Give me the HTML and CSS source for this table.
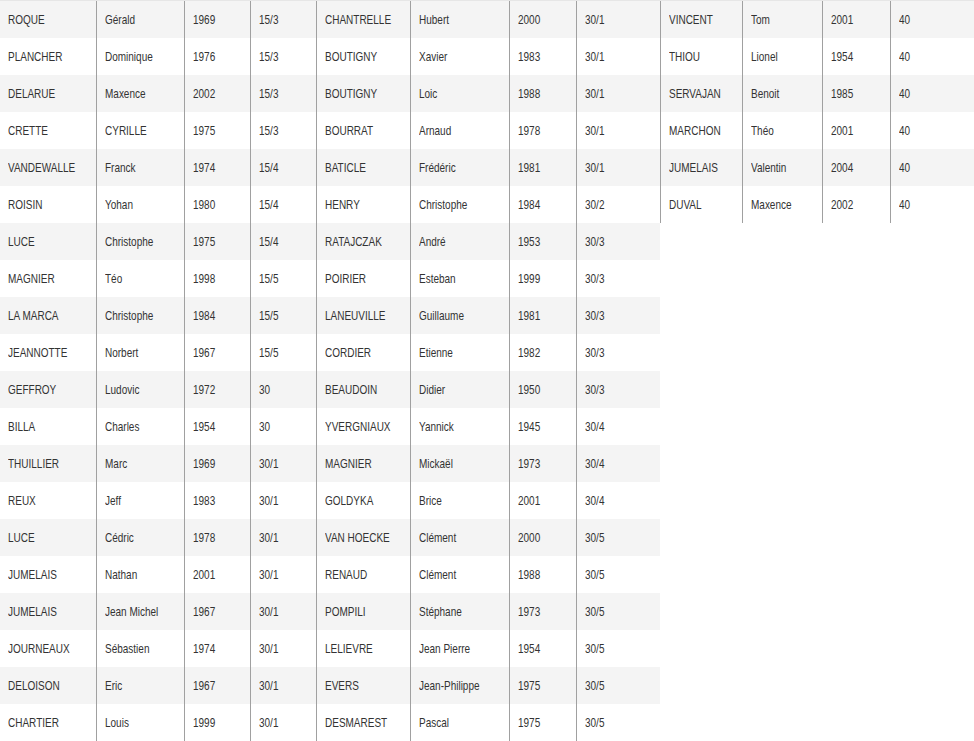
FILE: index.html
```html
<!DOCTYPE html>
<html lang="fr">
<head>
<meta charset="utf-8">
<title>Classement</title>
<link rel="stylesheet" href="styles.css">
</head>
<body>
<div class="sheet">
  <div class="tbl t1">
    <div class="row"><div class="c"><span>ROQUE</span></div><div class="c"><span>Gérald</span></div><div class="c"><span>1969</span></div><div class="c"><span>15/3</span></div></div>
    <div class="row"><div class="c"><span>PLANCHER</span></div><div class="c"><span>Dominique</span></div><div class="c"><span>1976</span></div><div class="c"><span>15/3</span></div></div>
    <div class="row"><div class="c"><span>DELARUE</span></div><div class="c"><span>Maxence</span></div><div class="c"><span>2002</span></div><div class="c"><span>15/3</span></div></div>
    <div class="row"><div class="c"><span>CRETTE</span></div><div class="c"><span>CYRILLE</span></div><div class="c"><span>1975</span></div><div class="c"><span>15/3</span></div></div>
    <div class="row"><div class="c"><span>VANDEWALLE</span></div><div class="c"><span>Franck</span></div><div class="c"><span>1974</span></div><div class="c"><span>15/4</span></div></div>
    <div class="row"><div class="c"><span>ROISIN</span></div><div class="c"><span>Yohan</span></div><div class="c"><span>1980</span></div><div class="c"><span>15/4</span></div></div>
    <div class="row"><div class="c"><span>LUCE</span></div><div class="c"><span>Christophe</span></div><div class="c"><span>1975</span></div><div class="c"><span>15/4</span></div></div>
    <div class="row"><div class="c"><span>MAGNIER</span></div><div class="c"><span>Téo</span></div><div class="c"><span>1998</span></div><div class="c"><span>15/5</span></div></div>
    <div class="row"><div class="c"><span>LA MARCA</span></div><div class="c"><span>Christophe</span></div><div class="c"><span>1984</span></div><div class="c"><span>15/5</span></div></div>
    <div class="row"><div class="c"><span>JEANNOTTE</span></div><div class="c"><span>Norbert</span></div><div class="c"><span>1967</span></div><div class="c"><span>15/5</span></div></div>
    <div class="row"><div class="c"><span>GEFFROY</span></div><div class="c"><span>Ludovic</span></div><div class="c"><span>1972</span></div><div class="c"><span>30</span></div></div>
    <div class="row"><div class="c"><span>BILLA</span></div><div class="c"><span>Charles</span></div><div class="c"><span>1954</span></div><div class="c"><span>30</span></div></div>
    <div class="row"><div class="c"><span>THUILLIER</span></div><div class="c"><span>Marc</span></div><div class="c"><span>1969</span></div><div class="c"><span>30/1</span></div></div>
    <div class="row"><div class="c"><span>REUX</span></div><div class="c"><span>Jeff</span></div><div class="c"><span>1983</span></div><div class="c"><span>30/1</span></div></div>
    <div class="row"><div class="c"><span>LUCE</span></div><div class="c"><span>Cédric</span></div><div class="c"><span>1978</span></div><div class="c"><span>30/1</span></div></div>
    <div class="row"><div class="c"><span>JUMELAIS</span></div><div class="c"><span>Nathan</span></div><div class="c"><span>2001</span></div><div class="c"><span>30/1</span></div></div>
    <div class="row"><div class="c"><span>JUMELAIS</span></div><div class="c"><span>Jean Michel</span></div><div class="c"><span>1967</span></div><div class="c"><span>30/1</span></div></div>
    <div class="row"><div class="c"><span>JOURNEAUX</span></div><div class="c"><span>Sébastien</span></div><div class="c"><span>1974</span></div><div class="c"><span>30/1</span></div></div>
    <div class="row"><div class="c"><span>DELOISON</span></div><div class="c"><span>Eric</span></div><div class="c"><span>1967</span></div><div class="c"><span>30/1</span></div></div>
    <div class="row"><div class="c"><span>CHARTIER</span></div><div class="c"><span>Louis</span></div><div class="c"><span>1999</span></div><div class="c"><span>30/1</span></div></div>
  </div>
  <div class="tbl t2">
    <div class="row"><div class="c"><span>CHANTRELLE</span></div><div class="c"><span>Hubert</span></div><div class="c"><span>2000</span></div><div class="c"><span>30/1</span></div></div>
    <div class="row"><div class="c"><span>BOUTIGNY</span></div><div class="c"><span>Xavier</span></div><div class="c"><span>1983</span></div><div class="c"><span>30/1</span></div></div>
    <div class="row"><div class="c"><span>BOUTIGNY</span></div><div class="c"><span>Loic</span></div><div class="c"><span>1988</span></div><div class="c"><span>30/1</span></div></div>
    <div class="row"><div class="c"><span>BOURRAT</span></div><div class="c"><span>Arnaud</span></div><div class="c"><span>1978</span></div><div class="c"><span>30/1</span></div></div>
    <div class="row"><div class="c"><span>BATICLE</span></div><div class="c"><span>Frédéric</span></div><div class="c"><span>1981</span></div><div class="c"><span>30/1</span></div></div>
    <div class="row"><div class="c"><span>HENRY</span></div><div class="c"><span>Christophe</span></div><div class="c"><span>1984</span></div><div class="c"><span>30/2</span></div></div>
    <div class="row"><div class="c"><span>RATAJCZAK</span></div><div class="c"><span>André</span></div><div class="c"><span>1953</span></div><div class="c"><span>30/3</span></div></div>
    <div class="row"><div class="c"><span>POIRIER</span></div><div class="c"><span>Esteban</span></div><div class="c"><span>1999</span></div><div class="c"><span>30/3</span></div></div>
    <div class="row"><div class="c"><span>LANEUVILLE</span></div><div class="c"><span>Guillaume</span></div><div class="c"><span>1981</span></div><div class="c"><span>30/3</span></div></div>
    <div class="row"><div class="c"><span>CORDIER</span></div><div class="c"><span>Etienne</span></div><div class="c"><span>1982</span></div><div class="c"><span>30/3</span></div></div>
    <div class="row"><div class="c"><span>BEAUDOIN</span></div><div class="c"><span>Didier</span></div><div class="c"><span>1950</span></div><div class="c"><span>30/3</span></div></div>
    <div class="row"><div class="c"><span>YVERGNIAUX</span></div><div class="c"><span>Yannick</span></div><div class="c"><span>1945</span></div><div class="c"><span>30/4</span></div></div>
    <div class="row"><div class="c"><span>MAGNIER</span></div><div class="c"><span>Mickaël</span></div><div class="c"><span>1973</span></div><div class="c"><span>30/4</span></div></div>
    <div class="row"><div class="c"><span>GOLDYKA</span></div><div class="c"><span>Brice</span></div><div class="c"><span>2001</span></div><div class="c"><span>30/4</span></div></div>
    <div class="row"><div class="c"><span>VAN HOECKE</span></div><div class="c"><span>Clément</span></div><div class="c"><span>2000</span></div><div class="c"><span>30/5</span></div></div>
    <div class="row"><div class="c"><span>RENAUD</span></div><div class="c"><span>Clément</span></div><div class="c"><span>1988</span></div><div class="c"><span>30/5</span></div></div>
    <div class="row"><div class="c"><span>POMPILI</span></div><div class="c"><span>Stéphane</span></div><div class="c"><span>1973</span></div><div class="c"><span>30/5</span></div></div>
    <div class="row"><div class="c"><span>LELIEVRE</span></div><div class="c"><span>Jean Pierre</span></div><div class="c"><span>1954</span></div><div class="c"><span>30/5</span></div></div>
    <div class="row"><div class="c"><span>EVERS</span></div><div class="c"><span>Jean-Philippe</span></div><div class="c"><span>1975</span></div><div class="c"><span>30/5</span></div></div>
    <div class="row"><div class="c"><span>DESMAREST</span></div><div class="c"><span>Pascal</span></div><div class="c"><span>1975</span></div><div class="c"><span>30/5</span></div></div>
  </div>
  <div class="tbl t3">
    <div class="row"><div class="c"><span>VINCENT</span></div><div class="c"><span>Tom</span></div><div class="c"><span>2001</span></div><div class="c"><span>40</span></div></div>
    <div class="row"><div class="c"><span>THIOU</span></div><div class="c"><span>Lionel</span></div><div class="c"><span>1954</span></div><div class="c"><span>40</span></div></div>
    <div class="row"><div class="c"><span>SERVAJAN</span></div><div class="c"><span>Benoit</span></div><div class="c"><span>1985</span></div><div class="c"><span>40</span></div></div>
    <div class="row"><div class="c"><span>MARCHON</span></div><div class="c"><span>Théo</span></div><div class="c"><span>2001</span></div><div class="c"><span>40</span></div></div>
    <div class="row"><div class="c"><span>JUMELAIS</span></div><div class="c"><span>Valentin</span></div><div class="c"><span>2004</span></div><div class="c"><span>40</span></div></div>
    <div class="row"><div class="c"><span>DUVAL</span></div><div class="c"><span>Maxence</span></div><div class="c"><span>2002</span></div><div class="c"><span>40</span></div></div>
  </div>
</div>
</body>
</html>
```
FILE: styles.css
```css
* { box-sizing: border-box; }
html, body { margin: 0; padding: 0; background: #fff; }
body {
  font-family: "Liberation Sans", Arial, sans-serif;
  font-size: 13.5px;
  color: #333;
}
.sheet {
  display: flex;
  align-items: flex-start;
  width: 974px;
  border-top: 1px solid #e6e6e6;
}
.tbl { display: flex; flex-direction: column; }
.t1 { width: 316px; }
.t2 { width: 344px; }
.t3 { width: 314px; }
.row {
  display: grid;
  height: 37px;
}
.t1 .row { grid-template-columns: 96px 88px 66px 66px; }
.t2 .row { grid-template-columns: 94px 99px 67px 84px; }
.t3 .row { grid-template-columns: 82px 80px 68px 84px; }
.row:nth-child(odd) { background: #f4f4f4; }
.c {
  display: flex;
  align-items: center;
  padding: 0 8px;
  border-left: 1px solid #a0a0a0;
  white-space: nowrap;
  overflow: hidden;
}
.c span {
  display: inline-block;
  transform: scaleX(0.74);
  transform-origin: left center;
}
.t1 .c:first-child { border-left: none; }
```
